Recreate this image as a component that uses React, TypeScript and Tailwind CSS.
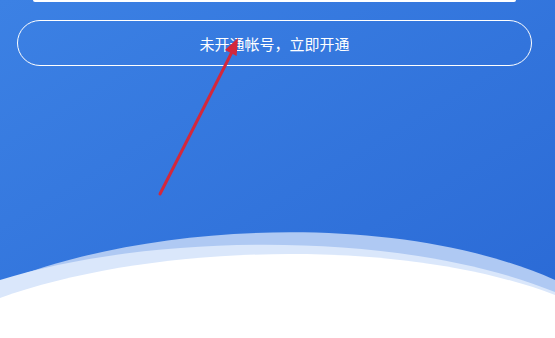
import React from "react";

export default function App() {
  return (
    <div
      className="relative w-[555px] h-[338px] overflow-hidden bg-gradient-to-br from-[#3c81e4] to-[#2a69d5]"
      style={{ fontFamily: '"Noto Sans CJK SC", "Noto Sans", sans-serif' }}
    >
      <div className="flex flex-col pl-[17px] pr-[23px]">
        <div className="mx-[16px] h-[2px] bg-white rounded-b-sm" />
        <button className="mt-[18px] h-[46px] w-full rounded-full border-[1.5px] border-white text-white text-[15px] leading-none flex items-center justify-center">
          未开通帐号，立即开通
        </button>
      </div>

      <svg
        className="absolute left-0 bottom-0 w-[555px] h-[118px]"
        viewBox="0 220 555 118"
        preserveAspectRatio="none"
      >
        <path d="M0 283 C 150 221, 400 211, 555 280 L555 338 L0 338 Z" fill="#afc9f3" />
        <path d="M0 280 C 150 233, 400 229, 555 292 L555 338 L0 338 Z" fill="#dae7fb" />
        <path d="M0 298 C 150 244, 400 236, 555 295 L555 338 L0 338 Z" fill="#ffffff" />
      </svg>

      <svg className="absolute left-0 top-0 w-[555px] h-[338px] pointer-events-none" viewBox="0 0 555 338">
        <line x1="160" y1="194" x2="233" y2="50" stroke="#d3283c" strokeWidth="3" strokeLinecap="round" />
        <polygon points="238,38 236.6,56 225,50" fill="#d3283c" />
      </svg>
    </div>
  );
}
